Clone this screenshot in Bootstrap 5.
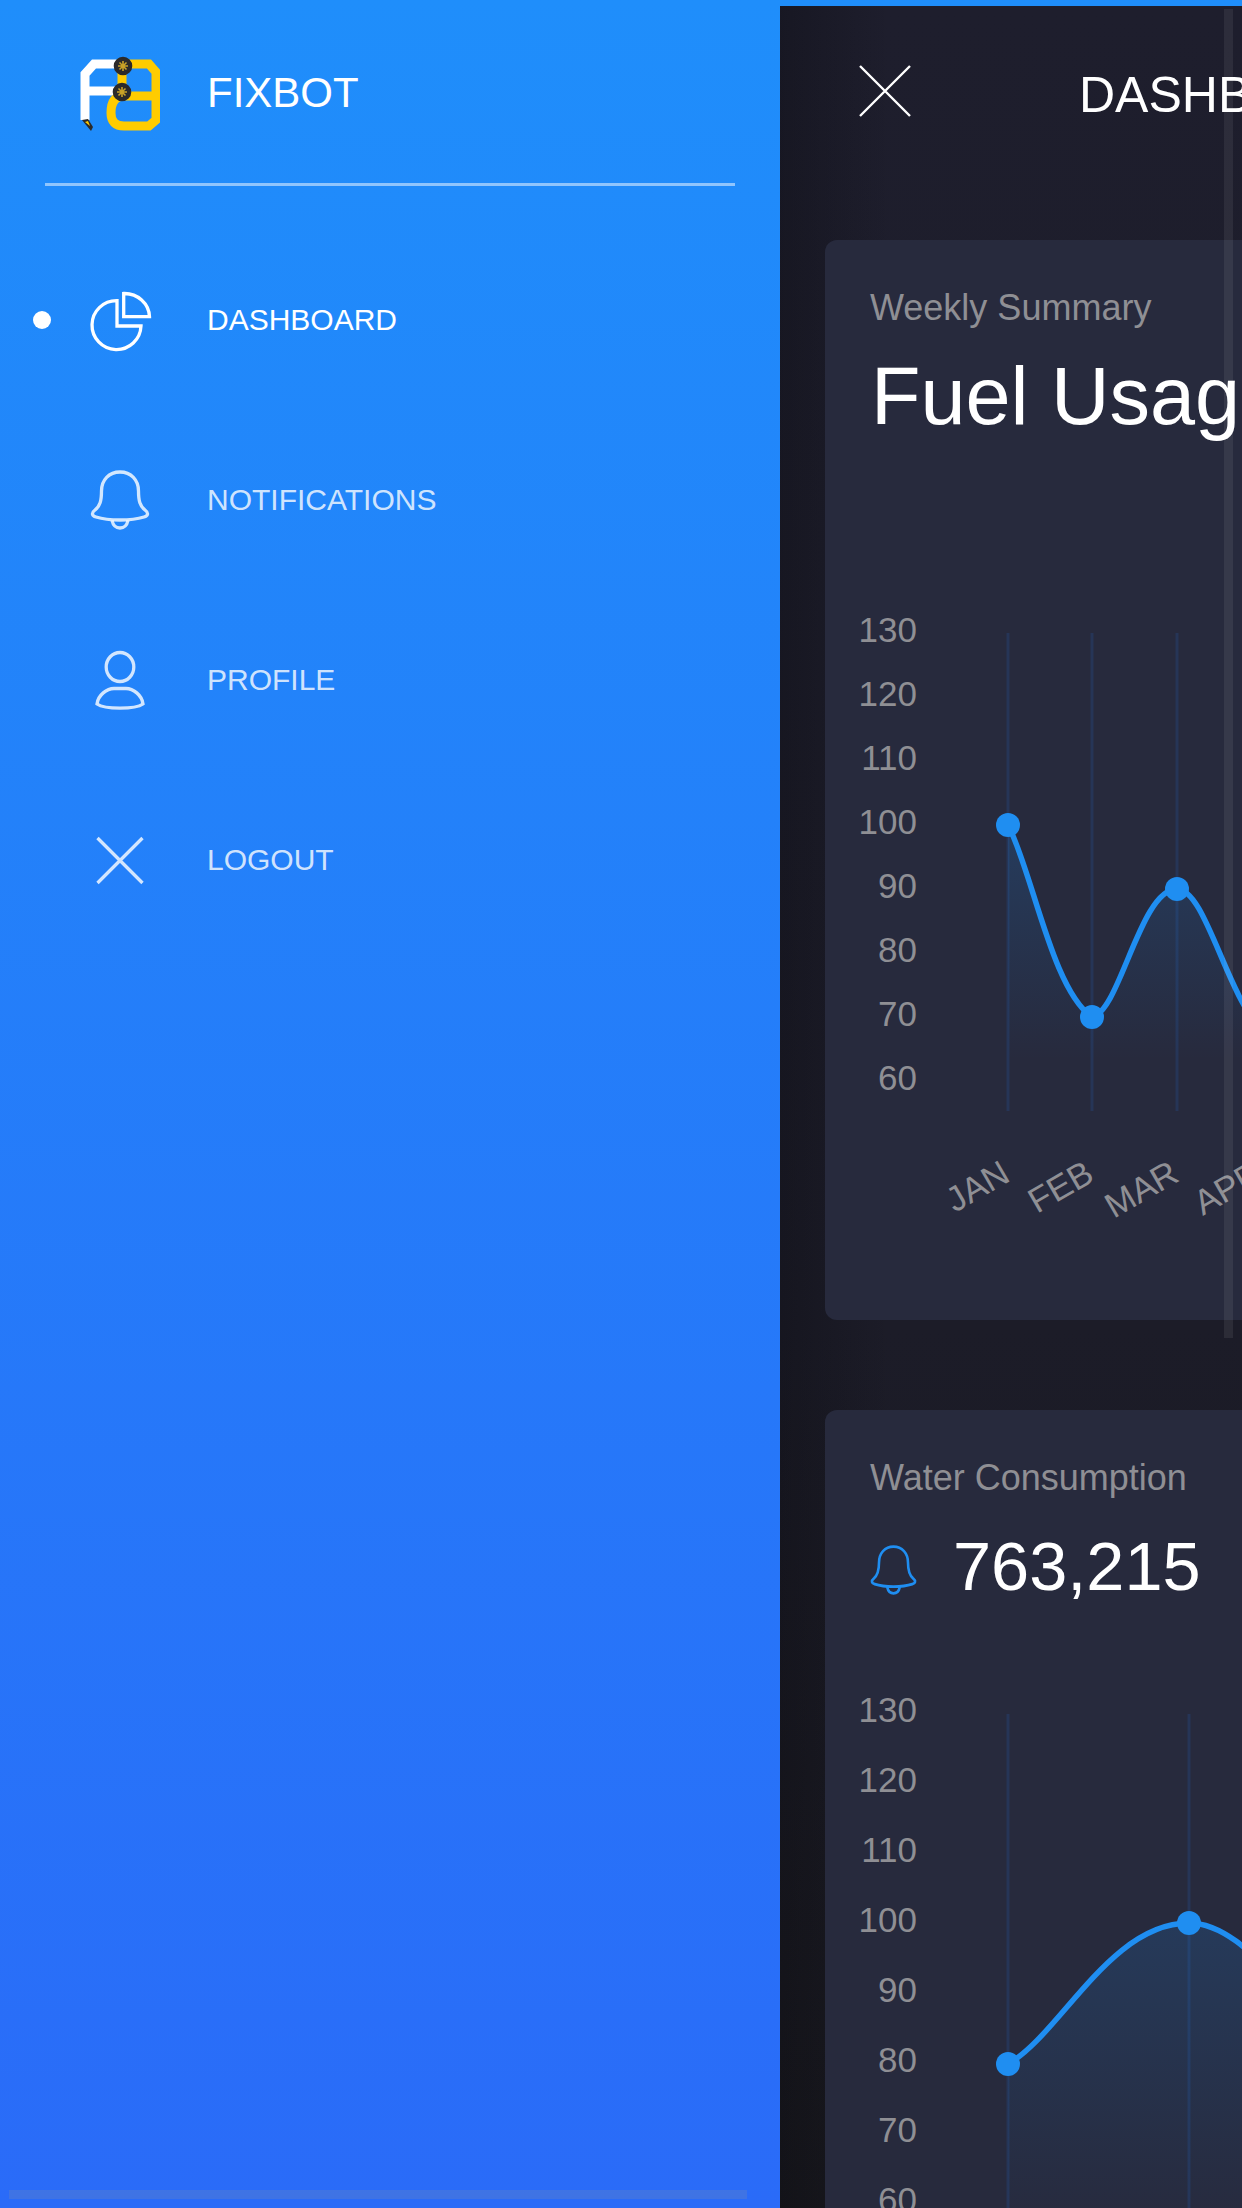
<!DOCTYPE html>
<html lang="en">

<head>
  <meta charset="UTF-8" />
  <meta name="viewport" content="width=device-width, initial-scale=1" />
  <title>Fixbot Dashboard</title>
  <link href="https://cdn.jsdelivr.net/npm/bootstrap@5.3.3/dist/css/bootstrap.min.css" rel="stylesheet">
  <style>
    html, body { height: 100%; }
    body {
      font-family: "Liberation Sans", Arial, sans-serif;
      background: #1f8dfb;
      overflow: hidden;
    }
    .app-shell { height: 2208px; background: linear-gradient(#1f8efb, #2a6bf8); overflow: hidden; }

    /* sidebar */
    .side-panel { width: 780px; flex: 0 0 780px; position: relative; height: 100%; }
    .brand-row { padding: 54px 0 0 80px; gap: 47px; color: #fff; font-size: 42px; }
    .brand-row span { padding-bottom: 4px; }
    .side-rule { margin: 49px 45px 44px; width: 690px; border-top: 3px solid #fff; opacity: .5; }
    .side-link { height: 180px; padding: 0 0 0 33px; color: rgba(255, 255, 255, .8); font-size: 30px; }
    .side-link.active { color: #fff; }
    .side-link .side-dot { width: 18px; height: 18px; border-radius: 50%; margin-right: 39px; }
    .side-link.active .side-dot { background: #fff; }
    .side-link svg { width: 60px; height: 60px; margin-right: 57px; overflow: visible; }
    .side-link .side-label { margin-top: -1px; }
    .side-scroll { position: absolute; left: 9px; top: 2190px; width: 738px; height: 9px; background: rgba(150, 150, 150, .2); }

    /* main */
    .main-panel {
      position: relative;
      flex: 1 1 auto;
      min-width: 0;
      margin-top: 6px;
      padding-left: 45px;
      overflow: hidden;
      background:
        linear-gradient(to right, rgba(8, 8, 12, .3), transparent 110px),
        linear-gradient(#1e1e2d, #1c1c28 60%, #18181e);
    }
    .main-bar { padding: 59px 0 0 34px; gap: 168px; margin-bottom: 119px; color: #fff; font-size: 50px; line-height: 52px; white-space: nowrap; }
    .main-bar span { padding-top: 4px; }
    .main-bar svg { width: 52px; height: 52px; flex: none; }
    .main-scroll { position: absolute; left: 444px; top: 3px; width: 9px; height: 1329px; background: rgba(255, 255, 255, .07); z-index: 2; }

    .stat-card {
      width: 1000px;
      background: #272a3d;
      border: 0;
      border-radius: 12px;
      margin-bottom: 90px;
      overflow: hidden;
    }
    .stat-card .card-body { padding: 46px 45px 0; }
    .stat-sub { color: #8f8f94; font-size: 36px; line-height: 43px; }
    .stat-title { color: #fff; font-size: 81px; line-height: 96px; font-weight: 400; margin: 19px 0 0 1px; }
    .stat-value { color: #fff; font-size: 68.500px; line-height: 82px; margin: 27px 0 1px; gap: 36px; }
    .stat-value svg { width: 47px; height: 50px; flex: none; overflow: visible; margin-top: 6px; }
    .chart-svg { display: block; margin-left: -45px; }
    .chart-grid { stroke: #263557; stroke-width: 3; }
    .chart-line { fill: none; stroke: #1f8ef1; stroke-width: 5.500; }
    .chart-dot { fill: #1f8ef1; }
    .chart-y { fill: #8f8f94; font-size: 35px; text-anchor: end; }
    .chart-x { fill: #8f8f94; font-size: 35px; text-anchor: end; }
  </style>
</head>

<body>

  <div class="app-shell d-flex">

    <aside class="side-panel">
      <div class="brand-row d-flex align-items-center">
        <svg width="80" height="80" viewBox="80 54 80 80" fill="none">
          <path d="M85 120V74L94 64H118M85 91H118" stroke="#fff" stroke-width="9" />
          <path d="M122 92V64H149L156 72V120L149 126H124Q111 126 111 113Q111 96 124 96H156" stroke="#ffcc00" stroke-width="9" />
          <g stroke="#c9a227" stroke-width="1.600">
            <circle cx="123" cy="66" r="8.500" fill="#2b2a2a" stroke="#2b2a2a" />
            <path d="M118 66H128M123 61V71M119.500 62.500L126.500 69.500M126.500 62.500L119.500 69.500" />
            <circle cx="122" cy="92" r="8.500" fill="#2b2a2a" stroke="#2b2a2a" />
            <path d="M117 92H127M122 87V97M118.500 88.500L125.500 95.500M125.500 88.500L118.500 95.500" />
          </g>
          <path d="M82 120L88 119L93 127L91 131Z" fill="#2b2a2a" />
          <path d="M85 122L88 121L90 126Z" fill="#ffcc00" />
        </svg>
        <span>FIXBOT</span>
      </div>

      <hr class="side-rule">

      <nav class="nav flex-column">
        <a class="nav-link side-link active d-flex align-items-center" href="#">
          <span class="side-dot"></span>
          <svg viewBox="0 0 60 60" fill="none" stroke="currentColor" stroke-width="3.300">
            <path d="M27 10.600A24.500 24.500 0 1 0 51 36H27Z" />
            <path d="M33.700 3.500V26.700H59.500A25 24 0 0 0 33.700 3.500Z" />
          </svg>
          <span class="side-label">DASHBOARD</span>
        </a>
        <a class="nav-link side-link d-flex align-items-center" href="#">
          <span class="side-dot"></span>
          <svg viewBox="0 0 60 60" fill="none" stroke="currentColor" stroke-width="3.300">
            <path d="M30 2C19 2 11.500 10 11.500 21C11.500 31 10 36 5 40C1 43 2 46 6 47C14 49.500 22 50 30 50C38 50 46 49.500 54 47C58 46 59 43 55 40C50 36 48.500 31 48.500 21C48.500 10 41 2 30 2Z" />
            <path d="M22 50.500C23 55 26 58 30 58C34 58 37 55 38 50.500" />
          </svg>
          <span class="side-label">NOTIFICATIONS</span>
        </a>
        <a class="nav-link side-link d-flex align-items-center" href="#">
          <span class="side-dot"></span>
          <svg viewBox="0 0 60 60" fill="none" stroke="currentColor" stroke-width="3.300">
            <ellipse cx="30" cy="17" rx="13.800" ry="14.500" />
            <path d="M7 54C8 45 17 38.500 24 38.500H36C43 38.500 52 45 53 54C45 59.500 15 59.500 7 54Z" />
          </svg>
          <span class="side-label">PROFILE</span>
        </a>
        <a class="nav-link side-link d-flex align-items-center" href="#">
          <span class="side-dot"></span>
          <svg viewBox="0 0 60 60" fill="none" stroke="currentColor" stroke-width="3.300">
            <path d="M7.500 8L52.500 53M52.500 8L7.500 53" />
          </svg>
          <span class="side-label">LOGOUT</span>
        </a>
      </nav>

      <div class="side-scroll"></div>
    </aside>

    <main class="main-panel">
      <div class="main-scroll"></div>

      <div class="main-bar d-flex align-items-start">
        <svg viewBox="0 0 52 52" fill="none" stroke="#fff" stroke-width="2.400">
          <path d="M1 1L51 51M51 1L1 51" />
        </svg>
        <span>DASHBOARD</span>
      </div>

      <div class="card stat-card">
        <div class="card-body">
          <div class="stat-sub">Weekly Summary</div>
          <h2 class="stat-title">Fuel Usage</h2>
          <svg class="chart-svg" width="1000" height="876" viewBox="825 444 1000 876">
            <defs>
              <linearGradient id="fuelFill" gradientUnits="userSpaceOnUse" x1="0" y1="825" x2="0" y2="1060">
                <stop offset="0" stop-color="#1f8ef1" stop-opacity=".18" />
                <stop offset="1" stop-color="#1f8ef1" stop-opacity="0" />
              </linearGradient>
            </defs>
            <path class="chart-grid" d="M1008 633V1111M1092 633V1111M1177 633V1111" />
            <path fill="url(#fuelFill)" d="M1008 825C1032 870 1052 990 1092 1017C1120 1012 1140 889 1177 889C1205 889 1225 990 1261 1030V1111H1008Z" />
            <path class="chart-line" d="M1008 825C1032 870 1052 990 1092 1017C1120 1012 1140 889 1177 889C1205 889 1225 990 1261 1030" />
            <circle class="chart-dot" cx="1008" cy="825" r="12" />
            <circle class="chart-dot" cx="1092" cy="1017" r="12" />
            <circle class="chart-dot" cx="1177" cy="889" r="12" />
            <text class="chart-y" x="917" y="642">130</text>
            <text class="chart-y" x="917" y="706">120</text>
            <text class="chart-y" x="917" y="770">110</text>
            <text class="chart-y" x="917" y="834">100</text>
            <text class="chart-y" x="917" y="898">90</text>
            <text class="chart-y" x="917" y="962">80</text>
            <text class="chart-y" x="917" y="1026">70</text>
            <text class="chart-y" x="917" y="1090">60</text>
            <text class="chart-x" transform="translate(1012 1180) rotate(-30)">JAN</text>
            <text class="chart-x" transform="translate(1096 1180) rotate(-30)">FEB</text>
            <text class="chart-x" transform="translate(1181 1180) rotate(-30)">MAR</text>
            <text class="chart-x" transform="translate(1265 1180) rotate(-30)">APR</text>
          </svg>
        </div>
      </div>

      <div class="card stat-card">
        <div class="card-body">
          <div class="stat-sub">Water Consumption</div>
          <div class="stat-value d-flex align-items-center">
            <svg viewBox="0 0 60 60" preserveAspectRatio="none" fill="none" stroke="#1f8ef1" stroke-width="3.300">
              <path d="M30 2C19 2 11.500 10 11.500 21C11.500 31 10 36 5 40C1 43 2 46 6 47C14 49.500 22 50 30 50C38 50 46 49.500 54 47C58 46 59 43 55 40C50 36 48.500 31 48.500 21C48.500 10 41 2 30 2Z" />
              <path d="M22 50.500C23 55 26 58 30 58C34 58 37 55 38 50.500" />
            </svg>
            <span>763,215</span>
          </div>
          <svg class="chart-svg" width="1000" height="640" viewBox="825 1609 1000 640">
            <defs>
              <linearGradient id="waterFill" gradientUnits="userSpaceOnUse" x1="0" y1="1923" x2="0" y2="2230">
                <stop offset="0" stop-color="#1f8ef1" stop-opacity=".16" />
                <stop offset="1" stop-color="#1f8ef1" stop-opacity="0" />
              </linearGradient>
            </defs>
            <path class="chart-grid" d="M1008 1714V2250M1189 1714V2250" />
            <path fill="url(#waterFill)" d="M1008 2064C1060 2035 1110 1923 1189 1923C1240 1923 1280 1990 1370 2060V2250H1008Z" />
            <path class="chart-line" d="M1008 2064C1060 2035 1110 1923 1189 1923C1240 1923 1280 1990 1370 2060" />
            <circle class="chart-dot" cx="1008" cy="2064" r="12" />
            <circle class="chart-dot" cx="1189" cy="1923" r="12" />
            <text class="chart-y" x="917" y="1722">130</text>
            <text class="chart-y" x="917" y="1792">120</text>
            <text class="chart-y" x="917" y="1862">110</text>
            <text class="chart-y" x="917" y="1932">100</text>
            <text class="chart-y" x="917" y="2002">90</text>
            <text class="chart-y" x="917" y="2072">80</text>
            <text class="chart-y" x="917" y="2142">70</text>
            <text class="chart-y" x="917" y="2212">60</text>
          </svg>
        </div>
      </div>
    </main>

  </div>

  <script src="https://cdn.jsdelivr.net/npm/bootstrap@5.3.3/dist/js/bootstrap.bundle.min.js"></script>
</body>

</html>
